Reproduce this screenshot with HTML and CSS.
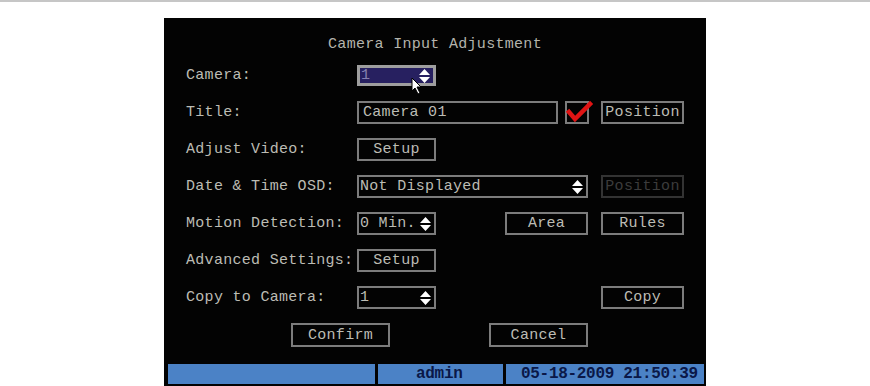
FILE: index.html
```html
<!DOCTYPE html>
<html lang="en">
<head>
  <meta charset="UTF-8" />
  <title>Camera Input Adjustment</title>
  <link rel="stylesheet" href="styles.css">
</head>
<body>
  <div class="topline"></div>

  <div class="screen">
    <h1 class="title">Camera Input Adjustment</h1>

    <!-- Camera -->
    <div class="row">
      <span class="label">Camera:</span>
      <div class="spin spin-active w79">
        <span>1</span>
        <svg class="arrows" width="11" height="14" viewBox="0 0 11 14"><path d="M5.5 0 L11 6 H0 Z M0 8 H11 L5.5 14 Z" fill="#fff"/></svg>
      </div>
    </div>

    <!-- Title -->
    <div class="row">
      <span class="label">Title:</span>
      <div class="field w201">Camera 01</div>
      <div class="check">
        <svg width="28" height="24" viewBox="0 0 28 24"><path d="M3 12 L9 19 L24 4" fill="none" stroke="#e01414" stroke-width="4.5" stroke-linecap="square"/></svg>
      </div>
      <button class="btn">Position</button>
    </div>

    <!-- Adjust Video -->
    <div class="row">
      <span class="label">Adjust Video:</span>
      <button class="btn w79">Setup</button>
    </div>

    <!-- Date & Time OSD -->
    <div class="row">
      <span class="label">Date &amp; Time OSD:</span>
      <div class="spin w231">
        <span>Not Displayed</span>
        <svg class="arrows" width="11" height="14" viewBox="0 0 11 14"><path d="M5.5 0 L11 6 H0 Z M0 8 H11 L5.5 14 Z" fill="#fff"/></svg>
      </div>
      <button class="btn off">Position</button>
    </div>

    <!-- Motion Detection -->
    <div class="row">
      <span class="label">Motion Detection:</span>
      <div class="spin w79">
        <span>0 Min.</span>
        <svg class="arrows" width="11" height="14" viewBox="0 0 11 14"><path d="M5.5 0 L11 6 H0 Z M0 8 H11 L5.5 14 Z" fill="#fff"/></svg>
      </div>
      <button class="btn push-area">Area</button>
      <button class="btn">Rules</button>
    </div>

    <!-- Advanced Settings -->
    <div class="row">
      <span class="label">Advanced Settings:</span>
      <button class="btn w79">Setup</button>
    </div>

    <!-- Copy to Camera -->
    <div class="row">
      <span class="label">Copy to Camera:</span>
      <div class="spin w79">
        <span>1</span>
        <svg class="arrows" width="11" height="14" viewBox="0 0 11 14"><path d="M5.5 0 L11 6 H0 Z M0 8 H11 L5.5 14 Z" fill="#fff"/></svg>
      </div>
      <button class="btn push-copy">Copy</button>
    </div>

    <!-- Confirm / Cancel -->
    <div class="actions">
      <button class="btn big">Confirm</button>
      <button class="btn big">Cancel</button>
    </div>

    <!-- Status Bar -->
    <div class="status">
      <div class="seg s1"></div>
      <div class="seg s2">admin</div>
      <div class="seg s3">05-18-2009 21:50:39</div>
    </div>

    <!-- mouse pointer -->
    <svg class="cursor" width="12" height="18" viewBox="0 0 12 18"><path d="M1 1 L1 14 L4 11 L7 17 L9 16 L6 10 L10 10 Z" fill="#fff" stroke="#000" stroke-width="1"/></svg>
  </div>
</body>
</html>
```

FILE: styles.css
```css
/* —— Reset & Base —— */
* { box-sizing: border-box; margin: 0; padding: 0; }
body { background: #fff; font-family: "Liberation Mono", "DejaVu Sans Mono", monospace; }

.topline { height: 2px; background: #c6c6c6; }

/* —— DVR Screen —— */
.screen {
  position: relative;
  width: 542px;
  height: 368px;
  margin: 16px 0 0 164px;
  background: #030303;
  color: #bcbcb4;
  font-size: 15px;
  letter-spacing: 0.3px;
  padding-left: 22px;
}
.title {
  font-size: 15px;
  font-weight: normal;
  text-align: center;
  line-height: 18px;
  padding: 18px 0 0 0;
  margin: 0 0 10px -22px;
  color: #b4b4ac;
}

/* —— Rows —— */
.row { display: flex; align-items: center; height: 23px; margin-bottom: 14px; }
.label { width: 171px; white-space: nowrap; }

.field, .spin, .btn {
  height: 23px;
  border: 2px solid #7c7c7c;
  background: transparent;
  color: #bcbcb4;
  font: inherit;
  letter-spacing: inherit;
  display: flex;
  align-items: center;
}
.field { padding-left: 4px; }
.spin { justify-content: space-between; padding: 0 3px 0 1px; }
.spin-active { background: #272060; border: 3px solid #9e9e9e; color: #8480b0; height: 21px; }
.arrows { display: block; flex-shrink: 0; }

.btn { width: 83px; justify-content: center; cursor: pointer; }
.btn.off { border-color: #333; color: #3c3c3c; margin-left: 13px; }

.row .w79 { width: 79px; }
.row .w201 { width: 201px; }
.row .w231 { width: 231px; }

.check {
  position: relative;
  width: 24px;
  height: 23px;
  border: 2px solid #7c7c7c;
  margin: 0 12px 0 7px;
}
.check svg { position: absolute; left: -1px; top: -3px; }

.push-area { margin-left: 69px; margin-right: 13px; }
.push-copy { margin-left: 165px; }

/* —— Confirm / Cancel —— */
.actions { display: flex; gap: 99px; margin: 0 0 17px 105px; height: 24px; }
.btn.big { width: 99px; height: 24px; }

/* —— Status Bar —— */
.status { display: flex; gap: 3px; height: 20px; margin-left: -18px; width: 536px; }
.seg {
  background: #4b82c6;
  color: #0a1848;
  font-size: 16px;
  font-weight: bold;
  letter-spacing: -0.3px;
  line-height: 20px;
}
.s1 { width: 207px; }
.s2 { width: 125px; padding-left: 38px; }
.s3 { flex: 1; padding-left: 15px; }

.cursor { position: absolute; left: 247px; top: 59px; }
```
